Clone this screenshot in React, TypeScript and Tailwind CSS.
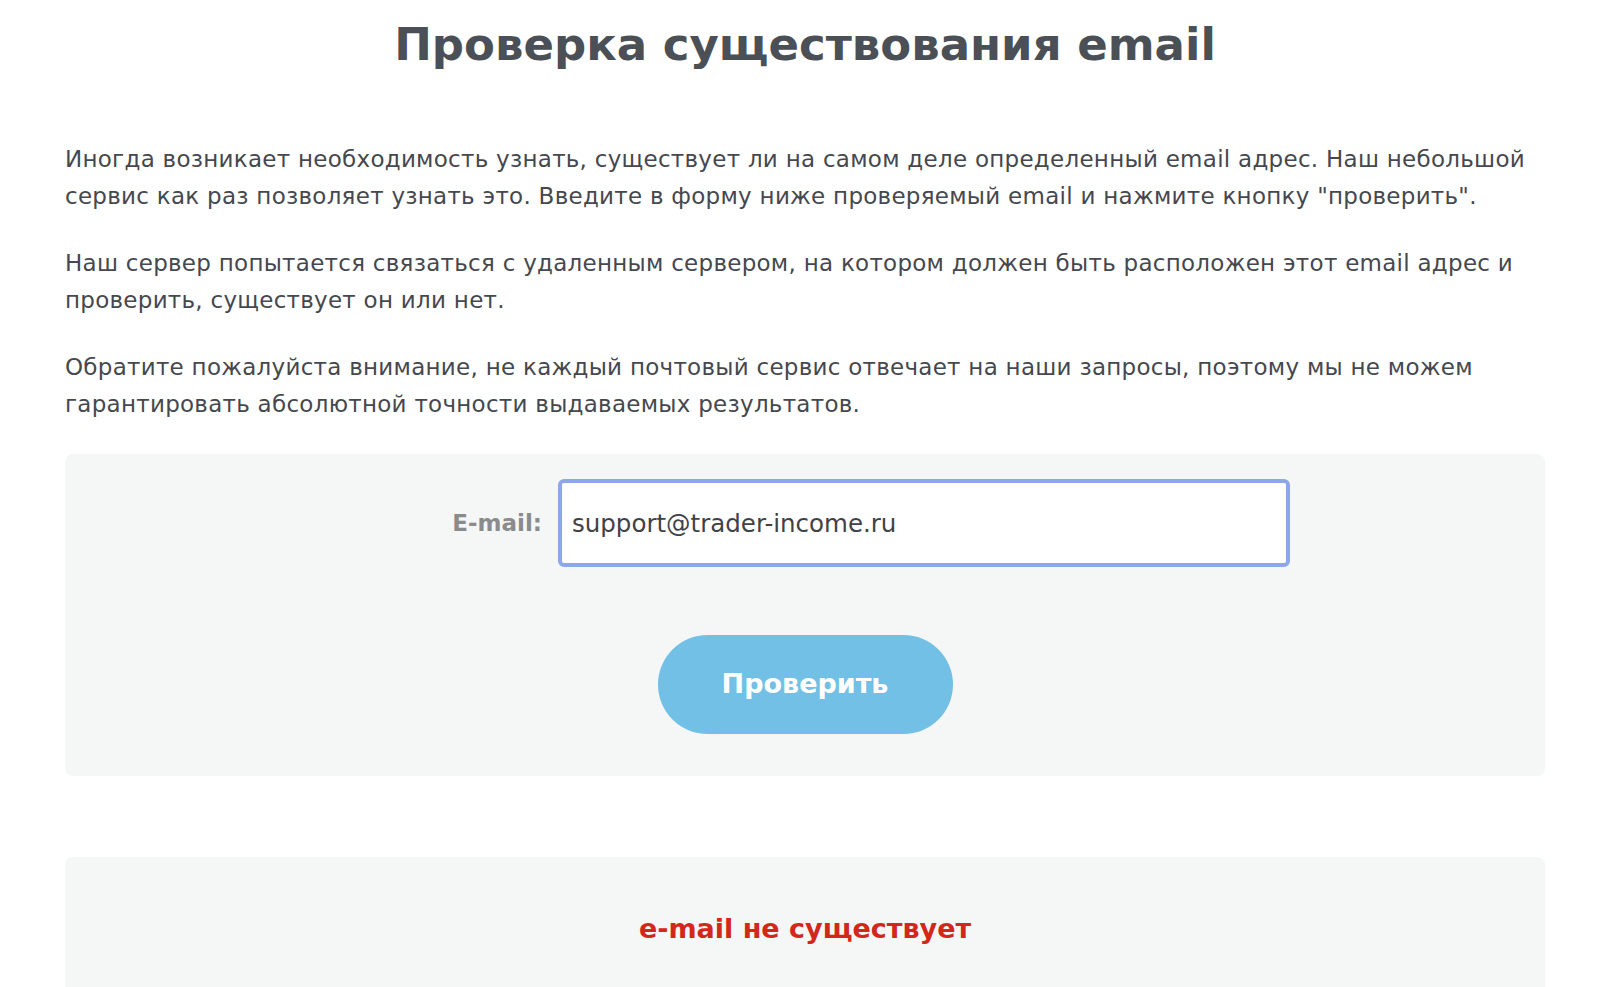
export default function App() {
  return (
    <div className="min-h-screen bg-white font-['DejaVu_Sans',sans-serif] text-[#45484e]">
      <div className="ml-[65px] w-[1480px]">
        <h1 className="pt-[16px] text-center text-[45px] font-bold leading-[58px] text-[#4b4f56]">
          Проверка существования email
        </h1>

        <div className="mt-[67px] flex flex-col gap-[30px] text-[23px] font-medium leading-[37px] tracking-[0.27px]">
          <p>
            Иногда возникает необходимость узнать, существует ли на самом деле определенный email адрес. Наш небольшой
            <br />
            сервис как раз позволяет узнать это. Введите в форму ниже проверяемый email и нажмите кнопку "проверить".
          </p>
          <p>
            Наш сервер попытается связаться с удаленным сервером, на котором должен быть расположен этот email адрес и
            <br />
            проверить, существует он или нет.
          </p>
          <p>
            Обратите пожалуйста внимание, не каждый почтовый сервис отвечает на наши запросы, поэтому мы не можем
            <br />
            гарантировать абсолютной точности выдаваемых результатов.
          </p>
        </div>

        <form
          className="mt-[31px] flex flex-col rounded-lg bg-[#f5f6f6] pt-[25px] pb-[42px]"
          onSubmit={(e) => e.preventDefault()}
        >
          <div className="flex items-center pl-[386px]">
            <label className="w-[91px] text-right text-[23px] font-bold text-[#8a8b8c]">E-mail:</label>
            <input
              type="text"
              defaultValue="support@trader-income.ru"
              className="ml-[16px] h-[88px] w-[732px] rounded-[6px] border-[4px] border-[#8ea7e9] bg-white px-[10px] text-[24.5px] text-[#3f4247] outline-none"
            />
          </div>
          <button
            type="submit"
            className="mx-auto mt-[68px] h-[99px] w-[295px] rounded-full bg-[#72c0e6] text-[27px] font-bold text-white"
          >
            Проверить
          </button>
        </form>

        <div className="mt-[81px] h-[200px] rounded-lg bg-[#f5f6f6] pt-[53px] text-center">
          <span className="text-[27px] font-bold leading-[38px] text-[#d3271c]">e-mail не существует</span>
        </div>
      </div>
    </div>
  );
}
